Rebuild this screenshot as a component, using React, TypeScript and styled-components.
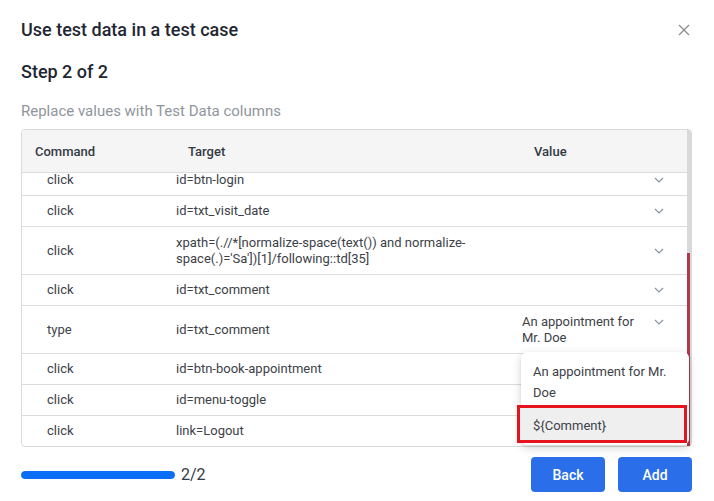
import React from "react";
import styled, { createGlobalStyle } from "styled-components";

const Global = createGlobalStyle`
  html, body { margin: 0; padding: 0; background: #ffffff; }
  body { font-family: Roboto, "Noto Sans", "Liberation Sans", sans-serif; color: #333; }
  * { box-sizing: border-box; }
`;

const Dialog = styled.div`
  width: 714px;
  height: 501px;
  padding: 18px 22px 0 21px;
  display: flex;
  flex-direction: column;
  background: #fff;
`;

const TitleRow = styled.div`
  display: flex;
  align-items: center;
  justify-content: space-between;
  height: 24px;
`;

const Title = styled.h2`
  margin: 0;
  font-size: 18px;
  line-height: 24px;
  font-weight: 500;
  color: #1f2733;
`;

const CloseButton = styled.button`
  width: 16px;
  height: 16px;
  padding: 0;
  border: none;
  background: transparent;
  display: flex;
  align-items: center;
  justify-content: center;
  cursor: pointer;
`;

const StepTitle = styled.h3`
  margin: 18px 0 0;
  font-size: 18px;
  line-height: 24px;
  font-weight: 500;
  color: #1f2733;
`;

const Description = styled.p`
  margin: 17px 0 0;
  font-size: 15px;
  line-height: 20px;
  color: #90959c;
`;

const TableWrap = styled.div`
  position: relative;
  margin-top: 8px;
  width: 671px;
  height: 318px;
  border: 1px solid #dadada;
  border-radius: 4px;
  display: flex;
`;

const TableMain = styled.div`
  flex: 1;
  display: flex;
  flex-direction: column;
  min-width: 0;
  border-radius: 4px 0 0 4px;
  overflow: hidden;
`;

const Columns = `
  display: grid;
  grid-template-columns: 140px 346px 179px;
`;

const HeaderRow = styled.div`
  ${Columns}
  height: 42px;
  flex-shrink: 0;
  background: #f5f5f5;
  border-bottom: 1px solid #dcdcdc;
  box-sizing: content-box;
  align-items: center;
`;

const HeadCell = styled.div<{ $pad: number }>`
  padding-left: ${(p) => p.$pad}px;
  font-size: 13px;
  font-weight: 500;
  color: #333a44;
`;

const Body = styled.div`
  flex: 1;
  overflow: hidden;
  display: flex;
  flex-direction: column;
  justify-content: flex-end;
`;

const Row = styled.div<{ $tall?: boolean }>`
  ${Columns}
  flex-shrink: 0;
  height: ${(p) => (p.$tall ? 47 : 30)}px;
  box-sizing: content-box;
  border-bottom: 1px solid #dcdcdc;
  align-items: center;
  font-size: 13px;
  line-height: 16px;
  color: #3d4148;
  &:last-child { border-bottom: none; }
`;

const Cell = styled.div<{ $pad: number }>`
  padding-left: ${(p) => p.$pad}px;
  padding-right: 14px;
`;

const ValueCell = styled.div`
  display: flex;
  align-items: flex-start;
  padding-left: 14px;
  padding-right: 23px;
  gap: 8px;
`;

const ValueText = styled.div`
  flex: 1;
  min-width: 0;
`;

const Chevron = styled.span`
  width: 10px;
  height: 16px;
  flex-shrink: 0;
  display: flex;
  align-items: center;
  justify-content: center;
`;

const Scrollbar = styled.div`
  width: 4px;
  flex-shrink: 0;
  background: #d9d9d9;
  display: flex;
  flex-direction: column;
  border-top-right-radius: 3px;
`;

const Thumb = styled.div`
  margin-top: 123px;
  flex: 1;
  width: 3px;
  background: #b2394b;
`;

const Popup = styled.div`
  position: absolute;
  left: 499px;
  top: 222px;
  width: 168px;
  padding-bottom: 2px;
  background: #fff;
  border-radius: 6px;
  box-shadow: 0 3px 10px rgba(0, 0, 0, 0.16), 0 1px 3px rgba(0, 0, 0, 0.08);
  z-index: 2;
`;

const Option = styled.div<{ $active?: boolean }>`
  font-size: 13px;
  line-height: 21px;
  color: #3d4148;
  padding: ${(p) => (p.$active ? "7px 10px 3px 13px" : "9px 12px 2px 12px")};
  ${(p) =>
    p.$active
      ? `
    margin-left: -4px;
    margin-right: 2px;
    line-height: 22px;
    border: 3px solid #e5141c;
    background: #efefef;
  `
      : ""}
`;

const Footer = styled.div`
  margin-top: 10px;
  height: 35px;
  display: flex;
  align-items: center;
  justify-content: space-between;
`;

const Progress = styled.div`
  display: flex;
  align-items: center;
  gap: 6px;
`;

const Track = styled.div`
  width: 154px;
  height: 8px;
  border-radius: 4px;
  background: #e6e6e6;
  overflow: hidden;
`;

const Fill = styled.div`
  height: 100%;
  border-radius: 4px;
  background: #0b6ef6;
`;

const ProgressLabel = styled.span`
  font-size: 16px;
  line-height: 20px;
  color: #333a44;
`;

const Buttons = styled.div`
  display: flex;
  gap: 13px;
`;

const Button = styled.button`
  width: 74px;
  height: 35px;
  border: none;
  border-radius: 4px;
  background: #2a6fe9;
  color: #fff;
  font-family: Roboto, "Noto Sans", sans-serif;
  font-size: 14px;
  font-weight: 500;
  cursor: pointer;
`;

const ChevronIcon = () => (
  <svg width="10" height="6" viewBox="0 0 10 6">
    <path d="M1 1 L5 5 L9 1" fill="none" stroke="#8a939e" strokeWidth="1.2" />
  </svg>
);

const CloseIcon = () => (
  <svg width="12" height="12" viewBox="0 0 12 12">
    <path d="M1 1 L11 11 M11 1 L1 11" stroke="#8c8c8c" strokeWidth="1.3" fill="none" />
  </svg>
);

type Step = { cmd: string; target: string; value?: string; tall?: boolean };

const steps: Step[] = [
  { cmd: "click", target: "id=btn-login" },
  { cmd: "click", target: "id=txt_visit_date" },
  {
    cmd: "click",
    target:
      "xpath=(.//*[normalize-space(text()) and normalize-space(.)='Sa'])[1]/following::td[35]",
    tall: true,
  },
  { cmd: "click", target: "id=txt_comment" },
  { cmd: "type", target: "id=txt_comment", value: "An appointment for Mr. Doe", tall: true },
  { cmd: "click", target: "id=btn-book-appointment" },
  { cmd: "click", target: "id=menu-toggle" },
  { cmd: "click", target: "link=Logout" },
];

export default function App() {
  const progress = 100;
  return (
    <>
      <Global />
      <Dialog>
        <TitleRow>
          <Title>Use test data in a test case</Title>
          <CloseButton aria-label="Close">
            <CloseIcon />
          </CloseButton>
        </TitleRow>
        <StepTitle>Step 2 of 2</StepTitle>
        <Description>Replace values with Test Data columns</Description>
        <TableWrap>
          <TableMain>
            <HeaderRow>
              <HeadCell $pad={13}>Command</HeadCell>
              <HeadCell $pad={26}>Target</HeadCell>
              <HeadCell $pad={26}>Value</HeadCell>
            </HeaderRow>
            <Body>
              {steps.map((s, i) => (
                <Row key={i} $tall={s.tall}>
                  <Cell $pad={25}>{s.cmd}</Cell>
                  <Cell $pad={14}>{s.target}</Cell>
                  <ValueCell>
                    <ValueText>{s.value ?? ""}</ValueText>
                    <Chevron>
                      <ChevronIcon />
                    </Chevron>
                  </ValueCell>
                </Row>
              ))}
            </Body>
          </TableMain>
          <Scrollbar>
            <Thumb />
          </Scrollbar>
          <Popup>
            <Option>An appointment for Mr. Doe</Option>
            <Option $active>{"${Comment}"}</Option>
          </Popup>
        </TableWrap>
        <Footer>
          <Progress>
            <Track>
              <Fill style={{ width: `${progress}%` }} />
            </Track>
            <ProgressLabel>2/2</ProgressLabel>
          </Progress>
          <Buttons>
            <Button>Back</Button>
            <Button>Add</Button>
          </Buttons>
        </Footer>
      </Dialog>
    </>
  );
}
